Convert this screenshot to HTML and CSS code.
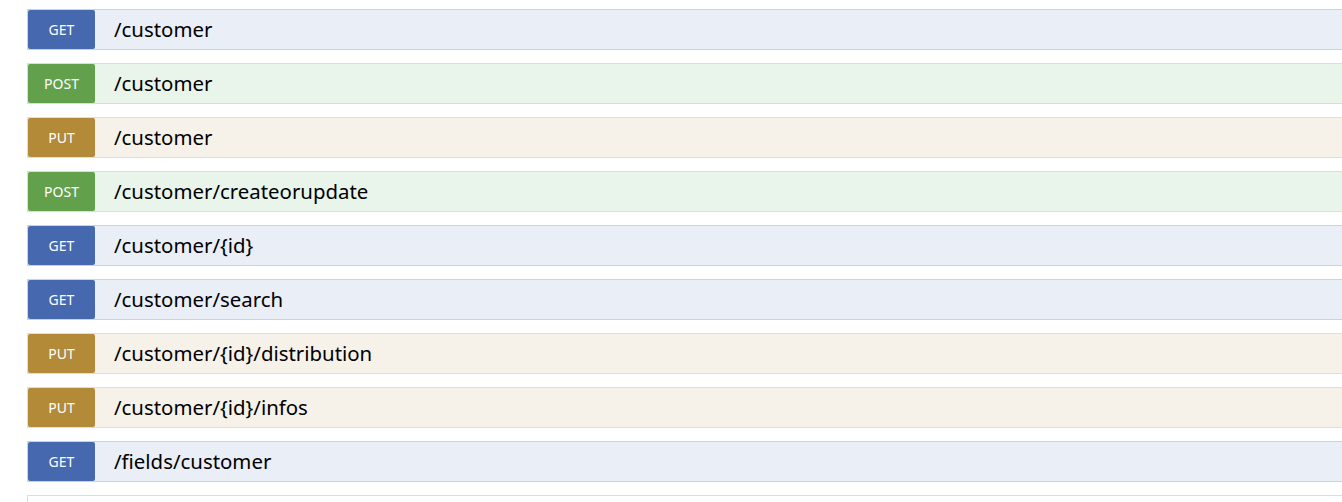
FILE: index.html
```html
<!DOCTYPE html>
<html>
<head>
    <meta charset="utf-8" />
    <title>customer</title>
    <link rel="stylesheet" href="styles.css">
</head>
<body>
    <ul class="endpoints">
        <li class="op get"><span class="method">GET</span><span class="path">/customer</span></li>
        <li class="op post"><span class="method">POST</span><span class="path">/customer</span></li>
        <li class="op put"><span class="method">PUT</span><span class="path">/customer</span></li>
        <li class="op post"><span class="method">POST</span><span class="path">/customer/createorupdate</span></li>
        <li class="op get"><span class="method">GET</span><span class="path">/customer/{id}</span></li>
        <li class="op get"><span class="method">GET</span><span class="path">/customer/search</span></li>
        <li class="op put"><span class="method">PUT</span><span class="path">/customer/{id}/distribution</span></li>
        <li class="op put"><span class="method">PUT</span><span class="path">/customer/{id}/infos</span></li>
        <li class="op get"><span class="method">GET</span><span class="path">/fields/customer</span></li>
        <li class="op more"></li>
    </ul>
</body>
</html>
```

FILE: styles.css
```css
*
{
    margin: 0;
    padding: 0;
}

html, body
{
    height: 100%;
    overflow: hidden;
    background: #fff;
}

body
{
    font-family: 'Noto Sans', 'Open Sans', sans-serif;
}

.endpoints
{
    list-style: none;
    display: flex;
    flex-direction: column;
    gap: 13px;
    padding: 9px 0 0 27px;
    width: calc(100% + 20px);
}

.op
{
    display: flex;
    align-items: center;
    flex: none;
    height: 39px;
    border: 1px solid;
    border-right: none;
}

.method
{
    width: 67px;
    height: 39px;
    border-radius: 2px;
    display: flex;
    align-items: center;
    justify-content: center;
    color: #fff;
    font-size: 14px;
}

.path
{
    margin-left: 19px;
    padding-bottom: 2px; /* text sits a hair above centre */
    font-size: 20.4px;
    color: #000;
}

.get
{
    background: #e9eef7;
    border-color: #c6d4e7;
}

    .get .method
    {
        background: #4568ae;
    }

.post
{
    background: #e9f4ea;
    border-color: #d1e3d2;
}

    .post .method
    {
        background: #62a04c;
    }

.put
{
    background: #f6f1e9;
    border-color: #ecdcc6;
}

    .put .method
    {
        background: #b38a38;
    }

.more
{
    background: #fff;
    border-color: #dcdcdc;
}
```
